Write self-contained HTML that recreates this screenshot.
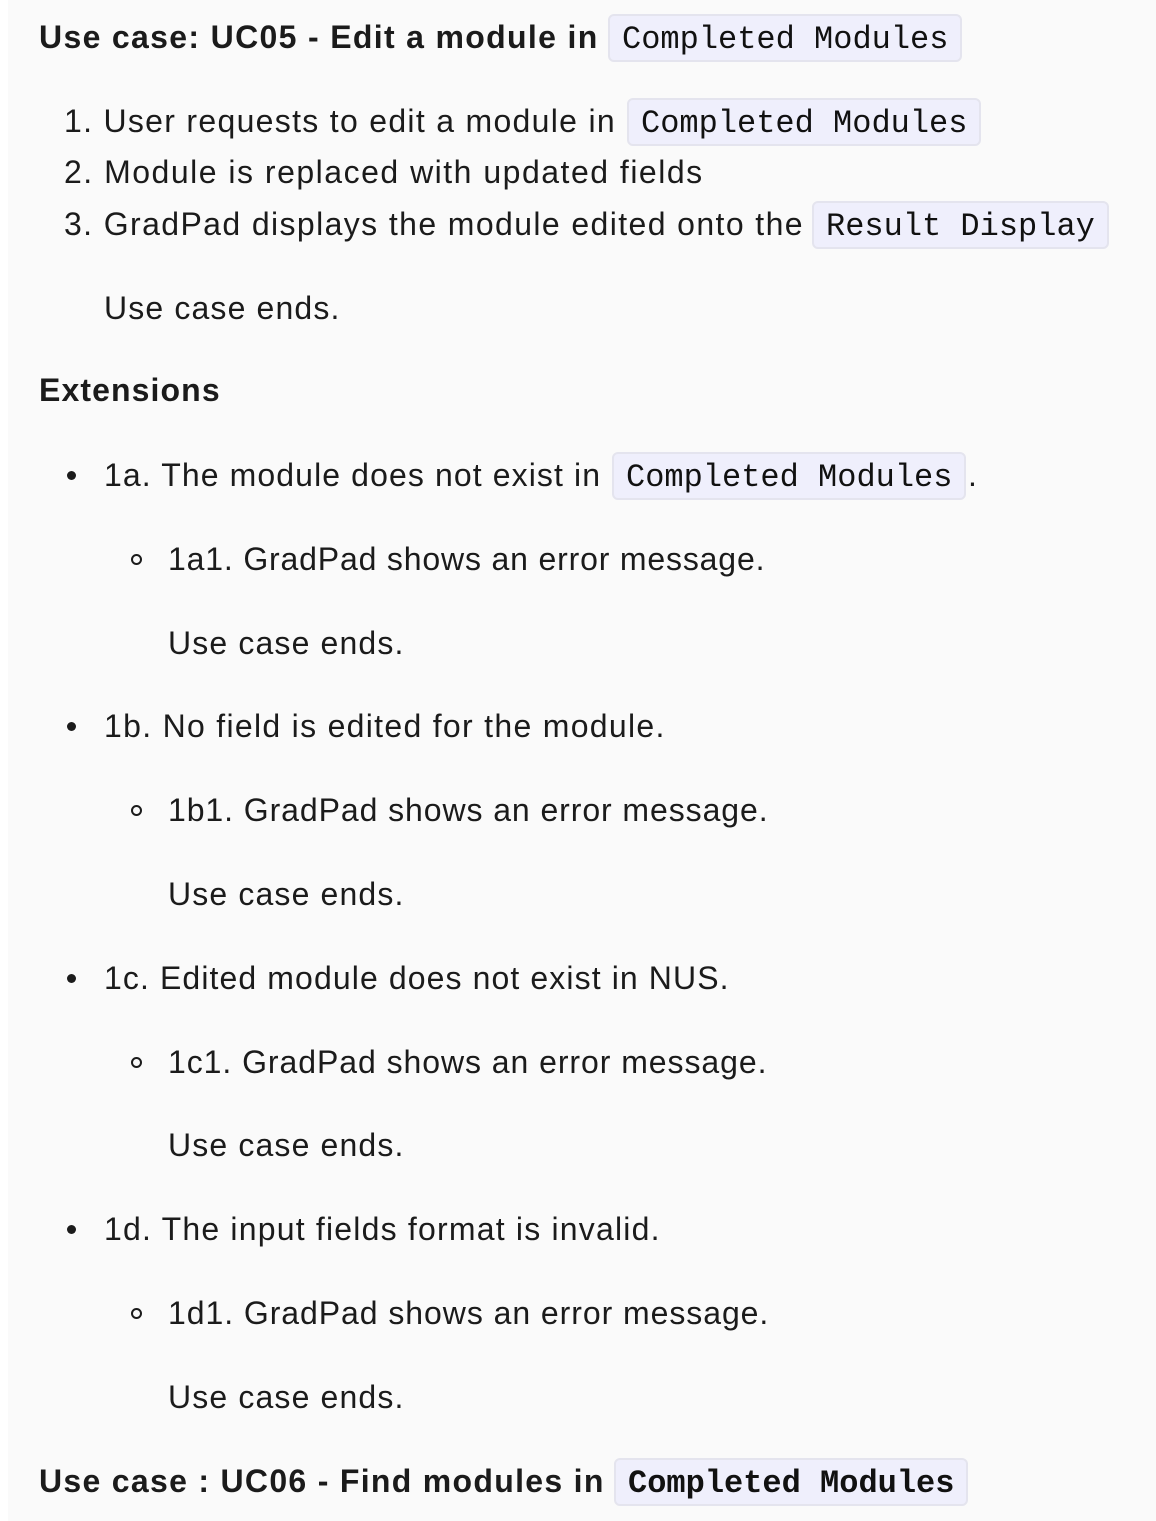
<!DOCTYPE html>
<html><head><meta charset="utf-8">
<style>
html,body{margin:0;padding:0;}
body{width:1156px;height:1521px;background:#fff;position:relative;overflow:hidden;font-family:"Liberation Sans",sans-serif;color:#1b1b1b;}
.bg{position:absolute;left:8px;top:0;right:0;bottom:0;background:#fafafa;}
.l{position:absolute;font-size:32px;line-height:52px;height:52px;white-space:nowrap;}
.h{font-weight:bold;}
.c{position:absolute;height:44px;line-height:47px;overflow:hidden;font-family:"Liberation Mono","DejaVu Sans Mono",monospace;font-size:32px;color:#111;background:#efeffc;border:2px solid #e4e4ee;border-radius:6px;padding:0 12px;box-sizing:content-box;white-space:nowrap;}
.dot{position:absolute;width:9px;height:9px;border-radius:50%;background:#1b1b1b;}
.cir{position:absolute;width:7px;height:7px;border-radius:50%;border:2px solid #1b1b1b;}
</style></head><body>
<div class="bg"></div>

<div class="l h" style="left:39px;top:11px;letter-spacing:1.33px">Use case: UC05 - Edit a module in</div>
<div class="c" style="left:608px;top:14px">Completed Modules</div>

<div class="l" style="left:64px;top:95px;letter-spacing:1.3px">1. User requests to edit a module in</div>
<div class="c" style="left:627px;top:98px">Completed Modules</div>
<div class="l" style="left:64px;top:146px;letter-spacing:1.5px">2. Module is replaced with updated fields</div>
<div class="l" style="left:64px;top:198px;letter-spacing:1.39px">3. GradPad displays the module edited onto the</div>
<div class="c" style="left:812px;top:201px">Result Display</div>

<div class="l" style="left:104px;top:282px;letter-spacing:1.14px">Use case ends.</div>

<div class="l h" style="left:39px;top:364px;letter-spacing:1.1px">Extensions</div>

<div class="dot" style="left:67px;top:471px"></div>
<div class="l" style="left:104px;top:449px;letter-spacing:1.1px">1a. The module does not exist in</div>
<div class="c" style="left:612px;top:452px">Completed Modules</div>
<div class="l" style="left:968px;top:449px">.</div>
<div class="cir" style="left:131px;top:554px"></div>
<div class="l" style="left:168px;top:533px;letter-spacing:0.83px">1a1. GradPad shows an error message.</div>
<div class="l" style="left:168px;top:617px;letter-spacing:1.14px">Use case ends.</div>

<div class="dot" style="left:67px;top:722px"></div>
<div class="l" style="left:104px;top:700px;letter-spacing:1.3px">1b. No field is edited for the module.</div>
<div class="cir" style="left:131px;top:805px"></div>
<div class="l" style="left:168px;top:784px;letter-spacing:0.92px">1b1. GradPad shows an error message.</div>
<div class="l" style="left:168px;top:868px;letter-spacing:1.14px">Use case ends.</div>

<div class="dot" style="left:67px;top:974px"></div>
<div class="l" style="left:104px;top:952px;letter-spacing:1.1px">1c. Edited module does not exist in NUS.</div>
<div class="cir" style="left:131px;top:1057px"></div>
<div class="l" style="left:168px;top:1036px;letter-spacing:0.94px">1c1. GradPad shows an error message.</div>
<div class="l" style="left:168px;top:1119px;letter-spacing:1.14px">Use case ends.</div>

<div class="dot" style="left:67px;top:1225px"></div>
<div class="l" style="left:104px;top:1203px;letter-spacing:1.2px">1d. The input fields format is invalid.</div>
<div class="cir" style="left:131px;top:1308px"></div>
<div class="l" style="left:168px;top:1287px;letter-spacing:0.94px">1d1. GradPad shows an error message.</div>
<div class="l" style="left:168px;top:1371px;letter-spacing:1.14px">Use case ends.</div>

<div class="l h" style="left:39px;top:1455px;letter-spacing:1.3px">Use case : UC06 - Find modules in</div>
<div class="c" style="left:614px;top:1458px;font-weight:bold">Completed Modules</div>
</body></html>
